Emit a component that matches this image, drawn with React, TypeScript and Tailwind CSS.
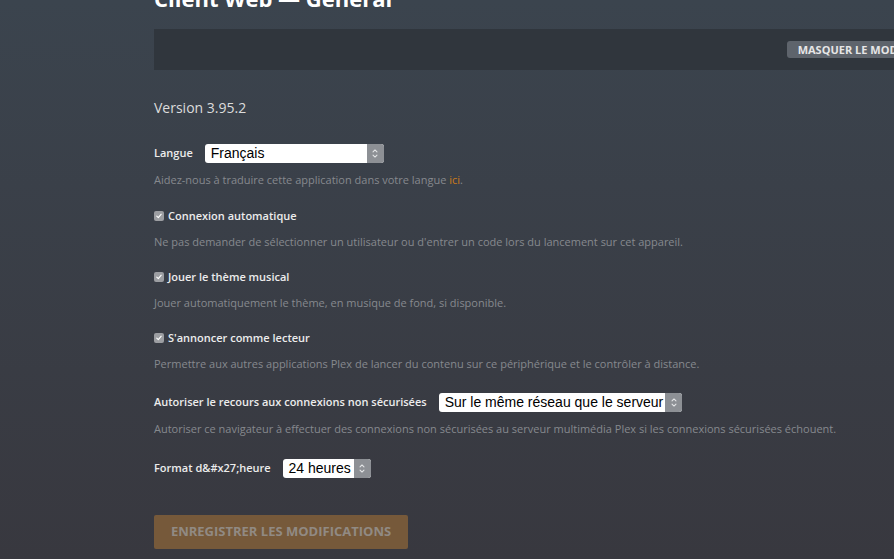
import React from 'react';

const Checkbox = () => (
  <span className="flex h-[10px] w-[10px] items-center justify-center rounded-[2px] bg-[#9c9ea2]">
    <svg viewBox="0 0 10 10" className="h-[8px] w-[8px]">
      <path d="M2.2 5.2 L4.1 7 L7.8 2.8" fill="none" stroke="#ffffff" strokeWidth="1.4" strokeLinecap="round" strokeLinejoin="round" />
    </svg>
  </span>
);

const SelectBox = ({ value, width }: { value: string; width?: string }) => (
  <div className={`flex h-[19px] items-stretch overflow-hidden rounded-[3px] bg-white ${width ?? ''}`}>
    <span className="flex-1 whitespace-nowrap pl-[6px] pr-[2px] font-['Liberation_Sans',sans-serif] text-[14px] leading-[19px] text-black">
      {value}
    </span>
    <span className="flex w-[17px] flex-col items-center justify-center bg-[#8d9095]">
      <svg viewBox="0 0 10 14" className="h-[11px] w-[8px]">
        <path d="M2.5 5 L5 2.5 L7.5 5 M2.5 9 L5 11.5 L7.5 9" fill="none" stroke="#e4e5e7" strokeWidth="1.4" strokeLinecap="round" strokeLinejoin="round" />
      </svg>
    </span>
  </div>
);

const CheckRow = ({ label, help }: { label: string; help: string }) => (
  <div>
    <div className="flex h-[20px] items-center gap-[4px]">
      <Checkbox />
      <span className="text-[11px] font-semibold text-[#ececec]">{label}</span>
    </div>
    <p className="mt-[6px] text-[11px] leading-[20px] text-[#86898e]">{help}</p>
  </div>
);

export default function App() {
  return (
    <div className="h-[559px] w-full overflow-hidden bg-gradient-to-b from-[#3b444e] to-[#38383f] font-['Open_Sans',sans-serif]">
      <div className="ml-[154px]">
        <h1 className="-mt-[17px] h-[30px] text-[22px] font-bold leading-[30px] text-white">Client Web — Général</h1>

        <div className="mt-[16px] flex h-[41px] items-center justify-end bg-[#30363d]">
          <span className="-mr-[68px] whitespace-nowrap rounded-[3px] bg-[#5e646c] px-[11px] py-[2px] text-[11px] font-bold leading-[13px] text-[#e6e6e6]">
            MASQUER LE MODE AVANCÉ
          </span>
        </div>

        <p className="mt-[29px] text-[14px] leading-[18px] text-[#dcdcdc]">Version 3.95.2</p>

        <div className="mt-[27px] flex items-center gap-[12px]">
          <span className="text-[11px] font-semibold text-[#ececec]">Langue</span>
          <SelectBox value="Français" width="w-[179px]" />
        </div>
        <p className="mt-[7px] text-[11px] leading-[20px] text-[#86898e]">
          Aidez-nous à traduire cette application dans votre langue <span className="text-[#cc7b1a]">ici</span>.
        </p>

        <div className="mt-[16px] flex flex-col gap-[15px]">
          <CheckRow
            label="Connexion automatique"
            help="Ne pas demander de sélectionner un utilisateur ou d&#x27;entrer un code lors du lancement sur cet appareil."
          />
          <CheckRow
            label="Jouer le thème musical"
            help="Jouer automatiquement le thème, en musique de fond, si disponible."
          />
          <CheckRow
            label="S&#x27;annoncer comme lecteur"
            help="Permettre aux autres applications Plex de lancer du contenu sur ce périphérique et le contrôler à distance."
          />
        </div>

        <div className="mt-[19px] flex items-center gap-[12px]">
          <span className="text-[11px] font-semibold text-[#ececec]">Autoriser le recours aux connexions non sécurisées</span>
          <SelectBox value="Sur le même réseau que le serveur" />
        </div>
        <p className="mt-[7px] text-[11px] leading-[20px] text-[#86898e]">
          Autoriser ce navigateur à effectuer des connexions non sécurisées au serveur multimédia Plex si les connexions sécurisées échouent.
        </p>

        <div className="mt-[20px] flex items-center gap-[12px]">
          <span className="text-[11px] font-semibold text-[#ececec]">Format d&amp;#x27;heure</span>
          <SelectBox value="24 heures" width="w-[88px]" />
        </div>

        <button className="mt-[37px] flex h-[34px] w-[254px] items-center justify-center rounded-[2px] bg-[#76593a] text-[13px] font-bold text-[#918a83]">
          ENREGISTRER LES MODIFICATIONS
        </button>
      </div>
    </div>
  );
}
